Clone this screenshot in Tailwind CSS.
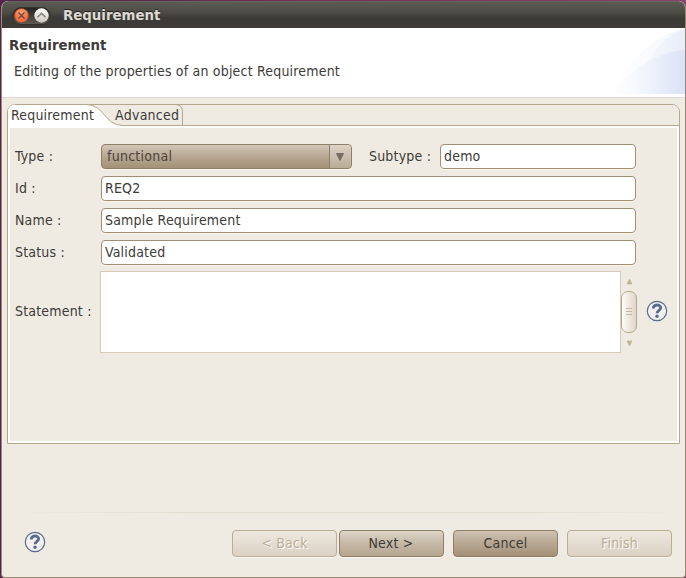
<!DOCTYPE html>
<html lang="en">
<head>
<meta charset="utf-8">
<title>Requirement</title>
<script src="https://cdn.jsdelivr.net/npm/@tailwindcss/browser@4"></script>
</head>
<body class="w-[686px] h-[578px] overflow-hidden bg-[linear-gradient(to_right,#55234b,#8b426f)] text-[#3c3b37] text-[14px] leading-[18px] tracking-[0.19px] pt-px" style="font-family:'DejaVu Sans Condensed','DejaVu Sans',sans-serif;font-stretch:condensed">
<div class="ml-px w-[685px] h-[577px] rounded-t-[7px] rounded-b-[4px] overflow-hidden border-x border-b border-[#968a74] bg-[#efebe3] flex flex-col">
  <header class="h-[27px] shrink-0 -mx-px flex items-center pl-[11px] pt-px border-t border-[#65645c] rounded-t-[7px] bg-[linear-gradient(#5b5a53,#4d4c46_40%,#3c3b37_60%,#3c3b37)]">
    <div class="w-[39px] h-[18px] rounded-full bg-[linear-gradient(#252522,#5c5b54)] border border-[#32312d] flex items-center gap-[5px] pl-px">
      <svg class="w-[15px] h-[15px]" viewBox="0 0 15 15"><defs><radialGradient id="o" cy=".3"><stop stop-color="#ffa679"/><stop offset="1" stop-color="#f07040"/></radialGradient></defs><circle cx="7.5" cy="7.5" r="7" fill="url(#o)" stroke="#a9451f" stroke-width=".5"/><path d="M4.500 4.500l6 6M10.500 4.500l-6 6" stroke="#744b38" stroke-width="1.5"/></svg>
      <svg class="w-[15px] h-[15px]" viewBox="0 0 15 15"><defs><linearGradient id="w" x2="0" y2="1"><stop stop-color="#fff"/><stop offset="1" stop-color="#cbc8be"/></linearGradient></defs><circle cx="7.5" cy="7.5" r="7.2" fill="url(#w)"/><path d="M3.500 9.200l4-3.800 4 3.800" fill="none" stroke="#85837b" stroke-width="1.5"/></svg>
    </div>
    <h1 class="ml-3 text-[13.33px] tracking-normal font-bold text-[#dfdbd2] font-['DejaVu_Sans'] [font-stretch:normal] [text-shadow:0_-1px_0_#24231f]">Requirement</h1>
  </header>
  <section class="h-[69px] shrink-0 bg-white relative">
    <svg class="absolute right-0 top-0 w-[76px] h-[66px]" viewBox="0 0 76 66"><defs><linearGradient id="b1"><stop stop-color="#fff"/><stop offset="1" stop-color="#dfe7f7"/></linearGradient><linearGradient id="b2"><stop stop-color="#fff"/><stop offset=".35" stop-color="#f5f8fd"/><stop offset="1" stop-color="#dae2f6"/></linearGradient></defs><path d="M3 66C20 32 42 9 76 0V66Z" fill="url(#b1)" opacity=".4"/><path d="M22 66C38 30 50 10 76 1V66Z" fill="url(#b1)" opacity=".6"/><path d="M3 66C24 38 48 25 76 22V66Z" fill="url(#b2)"/></svg>
    <h2 class="relative pt-[9px] pl-[7px] font-bold text-[13.33px] tracking-normal font-['DejaVu_Sans'] [font-stretch:normal]">Requirement</h2>
    <p class="relative mt-[7px] pl-3">Editing of the properties of an object Requirement</p>
  </section>
  <main class="border-t border-[#dfd9cf] pt-[6px] pl-[5px] flex-1 flex flex-col">
    <div class="w-[673px] h-[340px] border border-[#b5a78b] rounded-t-[8px] bg-white flex flex-col shrink-0">
      <nav class="relative h-[21px] shrink-0 bg-[#efebe3] border-b border-[#b5a78b] rounded-t-[7px] flex">
        <svg class="absolute left-0 top-[-1px] w-[180px] h-[22px]" viewBox="0 0 180 22"><path d="M0 22V7Q1 1 7 .5H78C97 1 96 20.500 114 21.500V22Z" fill="#fff"/><path d="M7 .5H78C97 1 96 20.500 114 21.500" fill="none" stroke="#b5a78b"/><path d="M168 .5Q174.500 1 174.500 8V22" fill="none" stroke="#b5a78b"/></svg>
        <span class="relative ml-[3px] mt-px w-[104px]">Requirement</span><span class="relative mt-px tracking-[0.27px]">Advanced</span>
      </nav>
      <div class="m-[2px] flex-1 bg-[#efebe3] pl-[5px] pt-4">
        <div class="grid grid-cols-[86px_535px] gap-y-[7px] items-center">
          <label class="pb-[2px]">Type :</label>
          <div class="flex items-center h-[25px]">
            <div class="w-[251px] h-[25px] rounded-[4px] border border-[#8f7f68] shadow-[0_1px_0_#faf7f2] bg-[linear-gradient(#d3c7b7,#b7a792_50%,#a49078)] flex items-center pl-[5px] text-[#4a453e]">
              <span class="flex-1 pb-[2px] tracking-[0.25px]">functional</span>
              <span class="w-[22px] h-[23px] border-l border-[#8f7f68] rounded-r-[3px] bg-[linear-gradient(#dcd3c6,#baab97)] flex items-center justify-center"><svg class="w-2 h-2 mr-[2px]" viewBox="0 0 8 8"><path d="M.5.5h7L4 7.500Z" fill="#77706a" stroke="#615b54" stroke-width=".7"/></svg></span>
            </div>
            <label class="ml-[17px] w-[71px] pb-[2px]">Subtype :</label>
            <div class="w-[196px] h-[25px] rounded-[4px] border border-[#a08e74] bg-white pl-[3px] pt-[2px] shadow-[0_1px_0_#faf7f2]">demo</div>
          </div>
          <label class="pb-[2px]">Id :</label><div class="h-[25px] rounded-[4px] border border-[#a08e74] bg-white pl-[3px] pt-[2px] shadow-[0_1px_0_#faf7f2]">REQ2</div>
          <label class="pb-[2px]">Name :</label><div class="h-[25px] rounded-[4px] border border-[#a08e74] bg-white pl-[3px] pt-[2px] shadow-[0_1px_0_#faf7f2]">Sample Requirement</div>
          <label class="pb-[2px]">Status :</label><div class="h-[25px] rounded-[4px] border border-[#a08e74] bg-white pl-[3px] pt-[2px] shadow-[0_1px_0_#faf7f2]">Validated</div>
        </div>
        <div class="flex items-center mt-[6px]">
          <label class="w-[85px] pb-[2px]">Statement :</label>
          <div class="w-[521px] h-[82px] border border-[#d6cab8] bg-white"></div>
          <svg class="w-4 h-[82px] shrink-0" viewBox="0 0 16 82"><defs><linearGradient id="s"><stop stop-color="#fffefb"/><stop offset="1" stop-color="#ddd4c6"/></linearGradient></defs><path d="M8.500 8l2.500 5H6ZM6 70h5l-2.500 5Z" fill="#c2b69f" stroke="#b5a78b" stroke-width=".5"/><rect x=".5" y="20.500" width="15" height="41" rx="6.500" fill="url(#s)" stroke="#b5a78b"/><path d="M5 37.500h6M5 40.500h6M5 43.500h6" stroke="#c5b9a3"/></svg>
          <svg class="ml-[9px] mb-[3px] w-[22px] h-[22px]" viewBox="0 0 22 22"><circle cx="11" cy="11" r="9.700" fill="#f2f1ef" stroke="#5a6b8d" stroke-width="1.200"/><path d="M7.300 8.600C7.300 3.900 14.600 4 14.600 7.800C14.600 10.400 11.100 10.400 11.100 13.300" fill="none" stroke="#5a6b92" stroke-width="2.900"/><circle cx="11" cy="16.300" r="1.700" fill="#5a6b92"/></svg>
        </div>
      </div>
    </div>
    <div class="mt-[68px] -ml-[5px] h-px shrink-0 bg-[linear-gradient(to_right,#efebe3,#e2dbcd_30%,#e2dbcd_75%,#efebe3)]"></div>
    <footer class="mt-[17px] flex items-center pl-[17px]">
      <svg class="w-[22px] h-[22px] mr-[186px] relative top-[-2px]" viewBox="0 0 22 22"><circle cx="11" cy="11" r="9.700" fill="#f2f1ef" stroke="#5a6b8d" stroke-width="1.200"/><path d="M7.300 8.600C7.300 3.900 14.600 4 14.600 7.800C14.600 10.400 11.100 10.400 11.100 13.300" fill="none" stroke="#5a6b92" stroke-width="2.900"/><circle cx="11" cy="16.300" r="1.700" fill="#5a6b92"/></svg>
      <button class="w-[105px] h-[27px] pb-[2px] rounded-[4px] border border-[#baad94] bg-[linear-gradient(#ede8de,#dbd1c4)] text-[#bbae96] [text-shadow:1px_1px_0_#fff] shadow-[0_1px_0_#faf7f2]">&lt; Back</button>
      <button class="ml-[2px] w-[105px] h-[27px] pb-[2px] pr-px rounded-[4px] border border-[#8f7f68] bg-[linear-gradient(#ddd5c9,#c5b8a6_50%,#b6a690)] shadow-[0_1px_0_#faf7f2]">Next &gt;</button>
      <button class="ml-[9px] w-[105px] h-[27px] pb-[2px] rounded-[4px] border border-[#8f7f68] bg-[linear-gradient(#cfc3b3,#b7a792_50%,#a49078)] shadow-[0_1px_0_#faf7f2]">Cancel</button>
      <button class="ml-[9px] w-[105px] h-[27px] pb-[2px] rounded-[4px] border border-[#baad94] bg-[linear-gradient(#ede8de,#dbd1c4)] text-[#bbae96] [text-shadow:1px_1px_0_#fff] shadow-[0_1px_0_#faf7f2]">Finish</button>
    </footer>
  </main>
</div>
</body>
</html>
